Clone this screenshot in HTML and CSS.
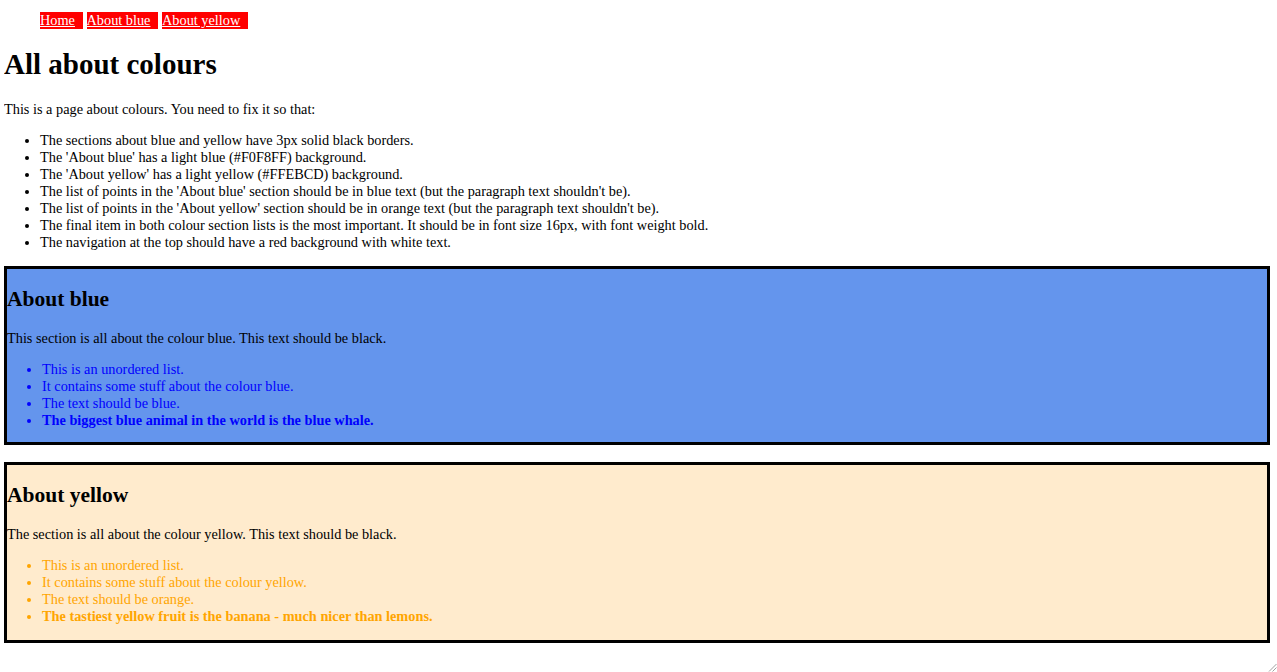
FILE: index.html
```html
<!DOCTYPE html>
<html lang="en">
<head>
<meta charset="utf-8">
<title>All about colours</title>
<link rel="stylesheet" href="styles.css">
</head>
<body>
<nav class="topnav">
  <ul class="topnav-list">
    <li class="topnav-item"><a href="#">Home</a></li>
    <li class="topnav-item"><a href="#blue">About blue</a></li>
    <li class="topnav-item"><a href="#yellow">About yellow</a></li>
  </ul>
</nav>
<h1 class="page-title">All about colours</h1>
<p class="text">This is a page about colours. You need to fix it so that:</p>
<ul class="list intro-list">
  <li>The sections about blue and yellow have 3px solid black borders.</li>
  <li>The 'About blue' has a light blue (#F0F8FF) background.</li>
  <li>The 'About yellow' has a light yellow (#FFEBCD) background.</li>
  <li>The list of points in the 'About blue' section should be in blue text (but the paragraph text shouldn't be).</li>
  <li>The list of points in the 'About yellow' section should be in orange text (but the paragraph text shouldn't be).</li>
  <li>The final item in both colour section lists is the most important. It should be in font size 16px, with font weight bold.</li>
  <li>The navigation at the top should have a red background with white text.</li>
</ul>
<section class="colour-section colour-blue" id="blue">
  <h2 class="section-title">About blue</h2>
  <p class="text">This section is all about the colour blue. This text should be black.</p>
  <ul class="list section-list">
    <li>This is an unordered list.</li>
    <li>It contains some stuff about the colour blue.</li>
    <li>The text should be blue.</li>
    <li class="important">The biggest blue animal in the world is the blue whale.</li>
  </ul>
</section>
<section class="colour-section colour-yellow" id="yellow">
  <h2 class="section-title">About yellow</h2>
  <p class="text">The section is all about the colour yellow. This text should be black.</p>
  <ul class="list section-list">
    <li>This is an unordered list.</li>
    <li>It contains some stuff about the colour yellow.</li>
    <li>The text should be orange.</li>
    <li class="important">The tastiest yellow fruit is the banana - much nicer than lemons.</li>
  </ul>
</section>
<div class="resize-grip" aria-hidden="true">
  <svg width="9" height="9" viewBox="0 0 9 9"><path d="M1 8.5 L8.5 1 M4.5 8.5 L8.5 4.5" stroke="#a0a0a0" stroke-width="1" fill="none"/></svg>
</div>
</body>
</html>
```
FILE: styles.css
```css
html {
  background: #ffffff;
}
body {
  margin: 0 7px 0 4px;
  font-family: "Liberation Serif", "Times New Roman", serif;
  font-size: 14.3px;
  line-height: 17px;
  color: #000000;
}
.topnav-list {
  list-style: none;
  margin: 12px 0 17px;
  padding: 0 0 0 36px;
  height: 17px;
}
.topnav-item {
  display: inline-block;
  background: #ff0000;
  padding-right: 8px;
  height: 17px;
  vertical-align: top;
}
.topnav-item a {
  color: #ffffff;
  text-decoration: underline;
}
.page-title {
  font-size: 29px;
  line-height: 35px;
  font-weight: bold;
  margin: 18px 0 19px;
}
.text {
  margin: 14px 0;
}
.list {
  margin: 14px 0;
  padding-left: 36px;
}
.intro-list {
  margin-bottom: 13px;
}
.colour-section {
  border: 3px solid #000000;
  margin: 15px 0 17px;
}
.section-title {
  font-size: 21.5px;
  line-height: 26px;
  font-weight: bold;
  margin: 17px 0 18px;
}
.section-list {
  padding-left: 35px;
  margin-bottom: 13px;
}
.colour-blue {
  background: #6495ed;
}
.colour-blue .section-list {
  color: #0000ff;
}
.colour-yellow {
  background: #ffebcd;
}
.colour-yellow .section-list {
  color: #ffa500;
  margin-bottom: 15px;
}
.important {
  font-weight: bold;
}
.resize-grip {
  position: absolute;
  right: 0;
  top: 663px;
  width: 9px;
  height: 9px;
}
.resize-grip svg {
  display: block;
}
```
